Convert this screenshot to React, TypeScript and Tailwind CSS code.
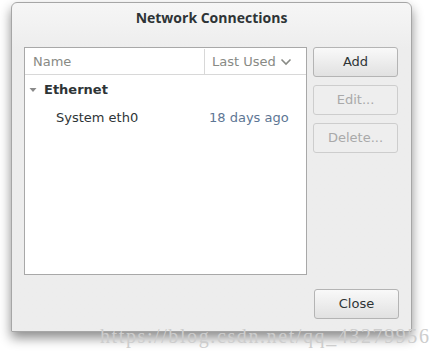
import React from "react";

const font = { fontFamily: '"DejaVu Sans", "Open Sans", sans-serif' };

function Btn({ label, disabled }: { label: string; disabled?: boolean }) {
    return (
        <button
            className={
                disabled
                    ? "h-[30px] w-[85px] rounded-[3px] border border-[#cdcdcd] bg-[#eeeeee] text-[13px] text-[#a9a9a9]"
                    : "h-[30px] w-[85px] rounded-[3px] border border-[#b4b4b4] bg-gradient-to-b from-[#f9f9f9] to-[#e1e1e1] text-[13px] text-[#2e3436]"
            }
        >
            {label}
        </button>
    );
}

export default function App() {
    return (
        <div className="relative h-[355px] w-[440px] bg-white" style={font}>
            <div className="ml-[11px] pt-[2px]">
                <div className="flex h-[330px] w-[401px] flex-col rounded-t-[6px] border border-[#a6a6a6] bg-gradient-to-b from-[#f6f6f6] to-[#ededed] to-[14%] shadow-[0_6px_12px_rgba(0,0,0,0.45)]">
                    <div
                        className="flex h-[28px] items-center justify-center text-[14px] font-bold text-[#2e3436]"
                        style={{ fontFamily: '"Open Sans", sans-serif' }}
                    >
                        Network Connections
                    </div>
                    <div className="mt-[16px] flex gap-[6px] pl-[12px]">
                        <div className="flex h-[228px] w-[283px] flex-col border border-[#a8a8a8] bg-white">
                            <div className="flex h-[27px] border-b border-[#d8d8d8] pt-[1px] text-[13px] text-[#888a85]">
                                <div className="flex flex-1 items-center pl-[8px]">Name</div>
                                <div className="flex w-[102px] items-center gap-[4px] border-l border-[#d8d8d8] pl-[7px]">
                                    Last Used
                                    <svg width="12" height="8" viewBox="0 0 12 8" className="mt-[1px]">
                                        <path d="M1.5 1.5 L6 6 L10.5 1.5" fill="none" stroke="#888a85" strokeWidth="1.6" />
                                    </svg>
                                </div>
                            </div>
                            <div className="flex h-[29px] items-center pl-[4px] pt-[1px] text-[13px] font-bold text-[#2e3436]">
                                <svg width="8" height="6" viewBox="0 0 8 6" className="mr-[7px]">
                                    <path d="M0.5 1 L7.5 1 L4 5 Z" fill="#8a8a8a" />
                                </svg>
                                Ethernet
                            </div>
                            <div className="flex h-[28px] items-center text-[13px] text-[#2e3436]">
                                <div className="flex-1 pl-[31px]">System eth0</div>
                                <div className="w-[97px] text-[#5d7694]">18 days ago</div>
                            </div>
                        </div>
                        <div className="flex flex-col gap-[8px]">
                            <Btn label="Add" />
                            <Btn label="Edit..." disabled />
                            <Btn label="Delete..." disabled />
                        </div>
                    </div>
                    <div className="mt-[14px] flex justify-end pr-[12px]">
                        <Btn label="Close" />
                    </div>
                </div>
            </div>
            <div
                className="absolute left-[100px] top-[321px] text-[20px] tracking-[1.6px] text-[#cdcdcd]"
                style={{ fontFamily: '"Liberation Serif", serif' }}
            >
                https://blog.csdn.net/qq_43279956
            </div>
        </div>
    );
}
